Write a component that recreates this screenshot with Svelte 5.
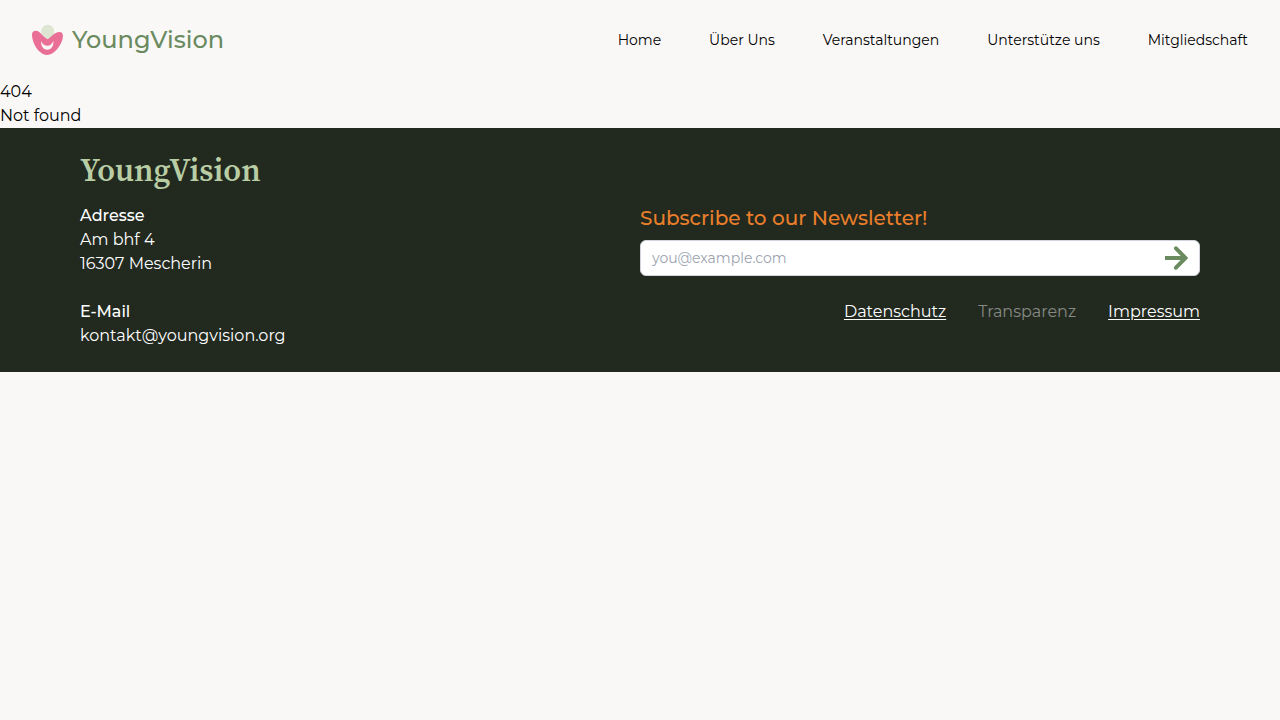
<script>
  const navigation = ['Home', 'Über Uns', 'Veranstaltungen', 'Unterstütze uns', 'Mitgliedschaft'];
  let email = $state('');
</script>

<header>
  <a class="brand" href="#home">
    <svg width="32" height="32" viewBox="0 0 32 32" aria-hidden="true">
      <ellipse cx="15.7" cy="8" rx="6.6" ry="7.3" fill="#dce6d2" />
      <path d="M0 10.5C0 7.7 2 6.5 4.5 6.8C8.700 7.300 10 12.500 15.600 15.300C20 12.500 23 7.900 27.500 8C30 8.100 31.200 9.800 30.900 12.800C30.300 20.300 22.500 31 15 31C7.500 31 0 19.800 0 10.500Z" fill="#e96f96" />
      <path d="M9.200 17C8.700 21.500 11 25.800 15.300 25.800C19.500 25.800 22 21.500 21.300 17C20 20.100 18.300 21.700 15.400 21.700C12.300 21.700 10.500 20.300 9.200 17Z" fill="#faf8f6" />
    </svg>
    <span>YoungVision</span>
  </a>
  <nav>
    {#each navigation as label}
      <a href="#{label}">{label}</a>
    {/each}
  </nav>
</header>

<main>
  <h1>404</h1>
  <p>Not found</p>
</main>

<footer>
  <h2>YoungVision</h2>
  <div class="columns">
    <div class="contact">
      <p class="label">Adresse</p>
      <p>Am bhf 4</p>
      <p>16307 Mescherin</p>
      <p class="label mail">E-Mail</p>
      <p>kontakt@youngvision.org</p>
    </div>
    <div class="side">
      <form onsubmit={(event) => event.preventDefault()}>
        <label for="email">Subscribe to our Newsletter!</label>
        <div class="field">
          <input id="email" type="email" placeholder="you@example.com" bind:value={email} />
          <button type="submit" aria-label="Subscribe">
            <svg width="24" height="24" viewBox="0 0 24 24" aria-hidden="true">
              <g fill="none" stroke="#6a8a5f" stroke-width="4">
                <path d="M1 12H20" />
                <path d="M12 2.300L21.500 12L12 21.700" stroke-linecap="round" />
              </g>
            </svg>
          </button>
        </div>
      </form>
      <div class="links">
        <a href="#datenschutz">Datenschutz</a>
        <span>Transparenz</span>
        <a href="#impressum">Impressum</a>
      </div>
    </div>
  </div>
</footer>

<style>
  :global(body) {
    margin: 0;
    background: #faf8f6;
    color: #000;
    font: 16px/24px Montserrat, Inter, sans-serif;
  }

  h1, h2, p {
    margin: 0;
    font-size: inherit;
    font-weight: 400;
  }

  a {
    color: inherit;
  }

  header {
    display: flex;
    align-items: center;
    justify-content: space-between;
    padding: 24px 32px;
  }

  .brand {
    display: flex;
    align-items: center;
    gap: 8px;
    color: #6a8a5f;
    font-size: 24px;
    font-weight: 500;
    line-height: 32px;
    text-decoration: none;
  }

  nav {
    display: flex;
    gap: 48px;
    font-size: 14px;
  }

  nav a {
    text-decoration: none;
  }

  footer {
    padding: 24px 80px;
    background: #22291f;
    color: #fff;
  }

  h2 {
    margin-bottom: 16px;
    color: #b9cda4;
    font: 600 32px/36px "Source Serif Pro", "Source Serif 4", "DejaVu Serif", serif;
  }

  .columns {
    display: grid;
    grid-template-columns: 1fr 1fr;
  }

  p.label {
    font-weight: 500;
  }

  p.mail {
    margin-top: 24px;
  }

  form label {
    display: block;
    margin-bottom: 8px;
    color: #e97e2b;
    font-size: 20px;
    font-weight: 500;
    line-height: 28px;
  }

  .field {
    display: flex;
    align-items: center;
    box-sizing: border-box;
    height: 36px;
    padding: 0 11px;
    border: 1px solid #d1d5db;
    border-radius: 6px;
    background: #fff;
  }

  .field:focus-within {
    outline: 2px solid #6a8a5f;
  }

  input {
    flex: 1;
    min-width: 0;
    padding: 0;
    border: 0;
    outline: 0;
    background: transparent;
    font: inherit;
    font-size: 14px;
    line-height: 20px;
  }

  input::placeholder {
    color: #9ca3af;
  }

  button {
    display: flex;
    padding: 0;
    border: 0;
    background: transparent;
    cursor: pointer;
  }

  .links {
    display: flex;
    justify-content: flex-end;
    gap: 32px;
    margin-top: 24px;
  }

  .links a {
    text-underline-offset: 2px;
  }

  .links span {
    color: #868a84;
  }
</style>
